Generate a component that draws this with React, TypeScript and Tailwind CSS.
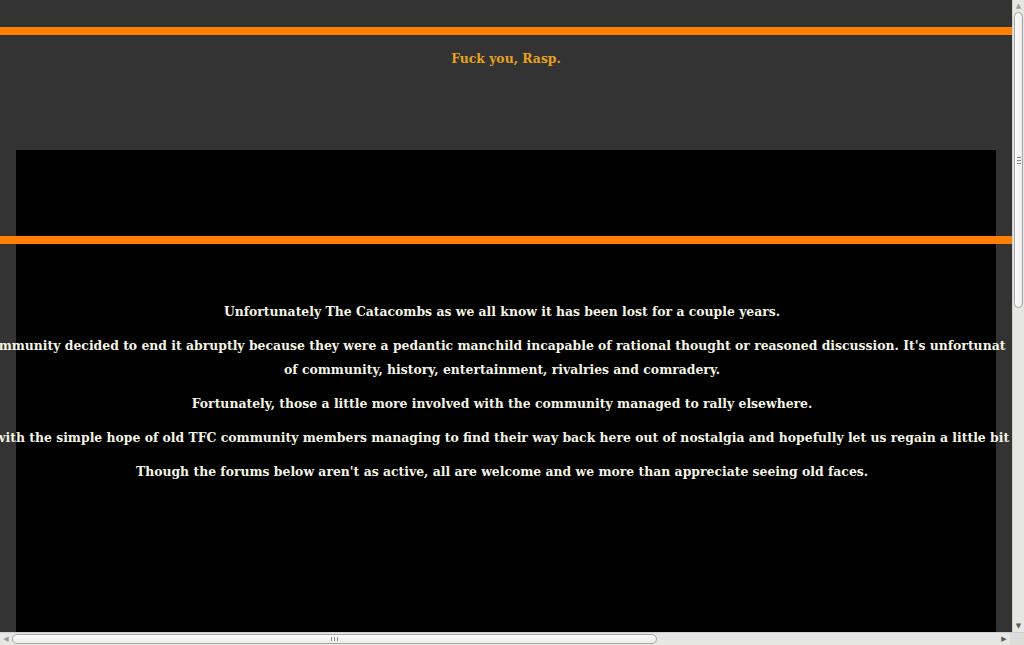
import React from 'react';

function VScrollbar() {
  return (
    <div className="w-[12px] flex flex-col bg-[#e6e6e4] border-l border-[#cfcfcf]">
      <div className="h-[12px] flex items-center justify-center text-[7px] leading-none text-[#9a9a9a]">▲</div>
      <div className="h-[296px] mx-[1px] rounded-[5px] border border-[#a8a8a8] bg-gradient-to-r from-[#fdfdfd] to-[#ececec] flex items-center justify-center">
        <div className="flex flex-col gap-[2px]">
          <div className="w-[4px] h-px bg-[#8c8c8c]" />
          <div className="w-[4px] h-px bg-[#8c8c8c]" />
          <div className="w-[4px] h-px bg-[#8c8c8c]" />
        </div>
      </div>
      <div className="flex-1" />
      <div className="h-[12px] flex items-center justify-center text-[7px] leading-none text-[#5a5a5a]">▼</div>
    </div>
  );
}

function HScrollbar() {
  return (
    <div className="h-[13px] flex bg-[#e6e6e4] border-t border-[#cfcfcf]">
      <div className="w-[12px] flex items-center justify-center text-[7px] leading-none text-[#9a9a9a]">◀</div>
      <div className="w-[645px] my-[1px] rounded-[5px] border border-[#a8a8a8] bg-gradient-to-b from-[#fdfdfd] to-[#ececec] flex items-center justify-center">
        <div className="flex gap-[2px]">
          <div className="h-[4px] w-px bg-[#8c8c8c]" />
          <div className="h-[4px] w-px bg-[#8c8c8c]" />
          <div className="h-[4px] w-px bg-[#8c8c8c]" />
        </div>
      </div>
      <div className="flex-1" />
      <div className="w-[12px] flex items-center justify-center text-[7px] leading-none text-[#5a5a5a]">▶</div>
      <div className="w-[14px] bg-[#dcdcda]" />
    </div>
  );
}

export default function App() {
  const paragraphs = [
    ['Unfortunately The Catacombs as we all know it has been lost for a couple years.'],
    [
      "mmunity decided to end it abruptly because they were a pedantic manchild incapable of rational thought or reasoned discussion. It's unfortunat",
      'of community, history, entertainment, rivalries and comradery.',
    ],
    ['Fortunately, those a little more involved with the community managed to rally elsewhere.'],
    [
      'with the simple hope of old TFC community members managing to find their way back here out of nostalgia and hopefully let us regain a little bit',
    ],
    ["Though the forums below aren't as active, all are welcome and we more than appreciate seeing old faces."],
  ];

  return (
    <div
      className="h-[645px] w-[1024px] overflow-hidden flex flex-col bg-[#333333]"
      style={{ fontFamily: '"DejaVu Serif", serif' }}
    >
      <div className="flex flex-1 min-h-0">
        <div className="w-[1012px] overflow-hidden flex flex-col pt-[27px]">
          <div className="h-2 bg-[#ff8000]" />
          <p className="mt-[14px] h-5 leading-5 text-center text-[12.4px] font-bold text-[#e8a21c]">
            Fuck you, Rasp.
          </p>
          <div className="mt-[81px] mx-4 flex-1 bg-black pt-[86px]">
            <div className="-mx-4 h-2 bg-[#ff8000]" />
            <div className="mt-[56px] pr-2 flex flex-col items-center gap-[10px] text-[12.4px] leading-6 font-bold text-[#f4f4e6]">
              {paragraphs.map((lines, i) => (
                <div key={i} className="flex flex-col items-center">
                  {lines.map((line, j) => (
                    <p key={j} className="whitespace-nowrap text-center">
                      {line}
                    </p>
                  ))}
                </div>
              ))}
            </div>
          </div>
        </div>
        <VScrollbar />
      </div>
      <HScrollbar />
    </div>
  );
}
